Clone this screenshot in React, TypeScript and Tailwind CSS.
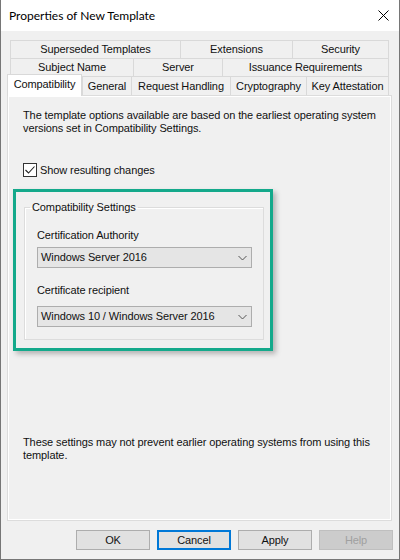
function Tab({ label, className }: { label: string; className: string }) {
  return (
    <div className={`flex items-center justify-center border-t border-l border-[#d9d9d9] bg-[#f0f0f0] ${className}`}>
      {label}
    </div>
  )
}

function Select({ value }: { value: string }) {
  return (
    <div className="w-[215px] h-[21px] ml-[12px] border border-[#adadad] bg-[#e5e5e5] flex items-center justify-between pl-[3px] pr-[4px]">
      <span>{value}</span>
      <svg width="9" height="6" viewBox="0 0 9 6" fill="none">
        <path d="M0.5 1 L4.5 5 L8.5 1" stroke="#555" strokeWidth="1" />
      </svg>
    </div>
  )
}

function Button({ label, className = "" }: { label: string; className?: string }) {
  return (
    <div className={`w-[74px] h-[20px] flex items-center justify-center border ${className}`}>
      {label}
    </div>
  )
}

export default function App() {
  return (
    <div className="w-[400px] h-[560px] bg-[#f0f0f0] border-l border-r border-b border-[#767676] text-[11px] leading-[13px] tracking-[-0.1px] text-[#111] font-['Liberation_Sans',Arial,sans-serif] flex flex-col overflow-hidden">
      {/* title bar */}
      <div className="h-[31px] bg-white flex items-center justify-between pl-[8px] pr-[10px] font-['Lato','Liberation_Sans',sans-serif] text-[12px] tracking-normal text-black">
        <span>Properties of New Template</span>
        <svg width="11" height="11" viewBox="0 0 11 11">
          <path d="M0.5 0.5 L10.5 10.5 M10.5 0.5 L0.5 10.5" stroke="#000" strokeWidth="1" />
        </svg>
      </div>

      {/* tab rows */}
      <div className="flex ml-[9px] mt-[9px]">
        <Tab label="Superseded Templates" className="w-[170px] h-[18px]" />
        <Tab label="Extensions" className="w-[112px] h-[18px]" />
        <Tab label="Security" className="w-[97px] h-[18px] border-r" />
      </div>
      <div className="flex ml-[9px]">
        <Tab label="Subject Name" className="w-[123px] h-[18px]" />
        <Tab label="Server" className="w-[89px] h-[18px]" />
        <Tab label="Issuance Requirements" className="w-[167px] h-[18px] border-r" />
      </div>
      <div className="flex ml-[6px] h-[19px] items-end">
        <div className="relative z-10 w-[75px] h-[22px] -mb-px bg-white border-t border-l border-r border-[#d9d9d9] flex items-start justify-center pt-[3px]">
          Compatibility
        </div>
        <Tab label="General" className="w-[49px] h-[19px]" />
        <Tab label="Request Handling" className="w-[99px] h-[19px]" />
        <Tab label="Cryptography" className="w-[76px] h-[19px]" />
        <Tab label="Key Attestation" className="w-[83px] h-[19px] border-r" />
      </div>

      {/* page */}
      <div className="ml-[6px] w-[385px] h-[426px] border border-[#dcdcdc] shadow-[inset_1px_1px_0_#fff,inset_-1px_-1px_0_#fff] flex flex-col">
        <p className="ml-[15px] mt-[13px] whitespace-nowrap">
          The template options available are based on the earliest operating system
          <br />
          versions set in Compatibility Settings.
        </p>

        <div className="ml-[15px] mt-[28px] flex items-center gap-[3px]">
          <div className="w-[14px] h-[14px] border border-[#333] bg-white flex items-center justify-center">
            <svg width="10" height="8" viewBox="0 0 10 8" fill="none">
              <path d="M0.5 4 L3.5 7 L9.5 0.5" stroke="#222" strokeWidth="1.1" />
            </svg>
          </div>
          <span>Show resulting changes</span>
        </div>

        <div className="ml-[5px] mt-[12px] w-[260px] h-[162px] border-[3px] border-[#14a98b] shadow-[3px_3px_5px_rgba(0,0,0,0.25)]">
          <fieldset className="ml-[8px] mt-[8px] w-[240px] border border-[#dcdcdc] pb-[12px] shadow-[inset_1px_1px_0_#fff]">
            <legend className="ml-[5px] px-[2px] leading-[14px]">Compatibility Settings</legend>
            <div className="ml-[12px] mt-[14px] leading-[14px]">Certification Authority</div>
            <div className="mt-[5px]">
              <Select value="Windows Server 2016" />
            </div>
            <div className="ml-[12px] mt-[15px] leading-[14px]">Certificate recipient</div>
            <div className="mt-[9px]">
              <Select value="Windows 10 / Windows Server 2016" />
            </div>
          </fieldset>
        </div>

        <p className="ml-[15px] mt-[85px] whitespace-nowrap">
          These settings may not prevent earlier operating systems from using this
          <br />
          template.
        </p>
      </div>

      {/* buttons */}
      <div className="flex ml-[75px] mt-[9px] gap-[7px]">
        <Button label="OK" className="bg-[#e1e1e1] border-[#adadad]" />
        <Button label="Cancel" className="bg-[#e1e1e1] border-2 border-[#0078d7]" />
        <Button label="Apply" className="bg-[#e1e1e1] border-[#adadad]" />
        <Button label="Help" className="bg-[#cccccc] border-[#bfbfbf] text-[#a0a0a0]" />
      </div>
    </div>
  )
}
